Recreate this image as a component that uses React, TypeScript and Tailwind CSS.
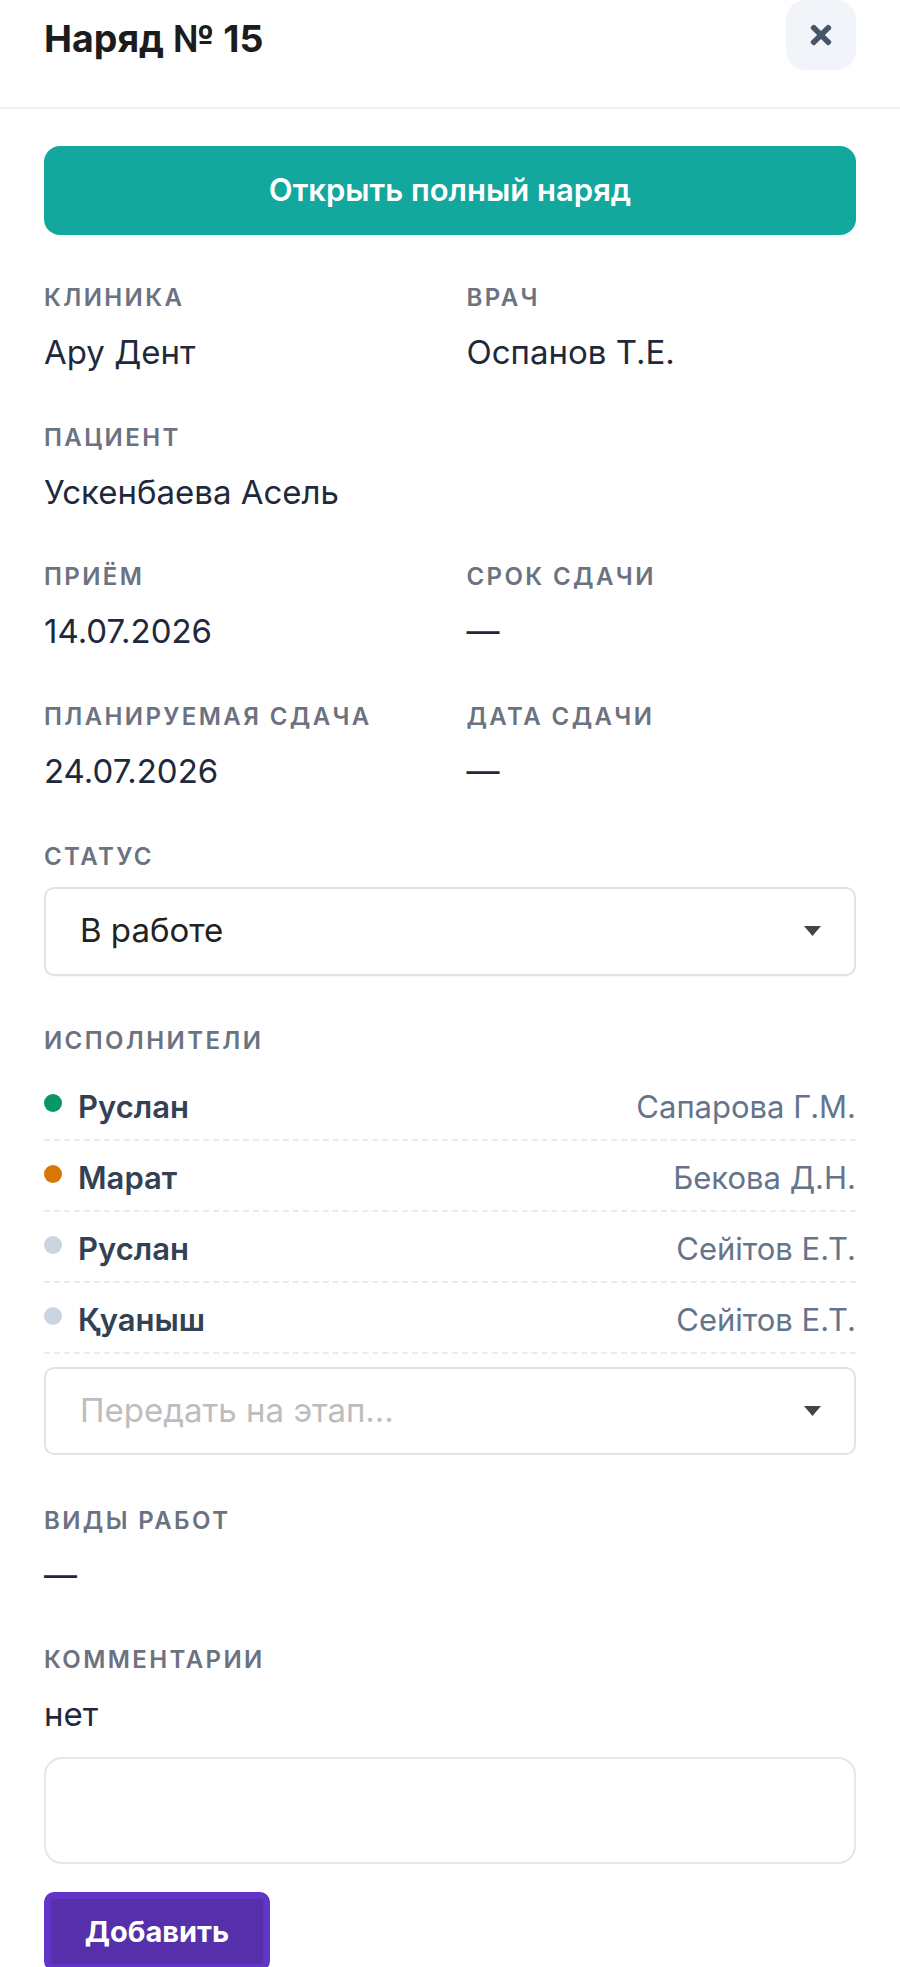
import { FaTimes } from 'react-icons/fa';

type Field = { label: string; value: string } | null;

const rows: [Field, Field][] = [
  [
    { label: 'Клиника', value: 'Ару Дент' },
    { label: 'Врач', value: 'Оспанов Т.Е.' },
  ],
  [{ label: 'Пациент', value: 'Ускенбаева Асель' }, null],
  [
    { label: 'Приём', value: '14.07.2026' },
    { label: 'Срок сдачи', value: '—' },
  ],
  [
    { label: 'Планируемая сдача', value: '24.07.2026' },
    { label: 'Дата сдачи', value: '—' },
  ],
];

const performers = [
  { name: 'Руслан', who: 'Сапарова Г.М.', dot: 'bg-[#059669]' },
  { name: 'Марат', who: 'Бекова Д.Н.', dot: 'bg-[#d97706]' },
  { name: 'Руслан', who: 'Сейітов Е.Т.', dot: 'bg-[#cbd5e1]' },
  { name: 'Қуаныш', who: 'Сейітов Е.Т.', dot: 'bg-[#cbd5e1]' },
];

function Label({ children, className = '' }: { children: React.ReactNode; className?: string }) {
  return (
    <div
      className={`text-[24px] leading-[36px] font-semibold uppercase tracking-[0.1em] text-[#6b7280] ${className}`}
    >
      {children}
    </div>
  );
}

function Value({ children }: { children: React.ReactNode }) {
  return <div className="mt-[16px] text-[33px] leading-[40px] text-[#1e293b]">{children}</div>;
}

function Caret() {
  return (
    <svg width="17" height="10" viewBox="0 0 17 10" className="shrink-0">
      <path d="M0 0h17L8.5 10z" fill="#444" />
    </svg>
  );
}

export default function App() {
  return (
    <div className="w-[900px] bg-white font-['Inter','Noto_Sans',sans-serif]">
      <header className="flex h-[109px] items-start justify-between border-b-2 border-[#eef1f5] pl-[44px] pr-[44px]">
        <h1 className="text-[37.5px] leading-[77px] font-bold text-[#1c1c1c]">Наряд № 15</h1>
        <button className="flex h-[70px] w-[70px] items-center justify-center rounded-[20px] bg-[#f1f4f8] text-[#475569]">
          <FaTimes className="h-[30px] w-[30px]" />
        </button>
      </header>

      <main className="px-[44px] pb-[40px]">
        <button className="mt-[37px] flex h-[89px] w-full items-center justify-center rounded-[16px] bg-[#13a89e] text-[31px] font-semibold text-white">
          Открыть полный наряд
        </button>

        <div className="mt-[45px] grid grid-cols-2 gap-x-[33px] gap-y-[47.5px]">
          {rows.flatMap((pair, i) =>
            pair.map((f, j) =>
              f ? (
                <div key={`${i}-${j}`}>
                  <Label>{f.label}</Label>
                  <Value>{f.value}</Value>
                </div>
              ) : (
                <div key={`${i}-${j}`} />
              ),
            ),
          )}
        </div>

        <Label className="mt-[48px]">Статус</Label>
        <div className="mt-[12px] flex h-[89px] items-center justify-between rounded-[10px] border-2 border-[#e2e2e2] pl-[34px] pr-[33px] shadow-[0_1px_1px_rgba(0,0,0,0.04)]">
          <span className="text-[33px] text-[#222]">В работе</span>
          <Caret />
        </div>

        <Label className="mt-[47px]">Исполнители</Label>
        <div className="mt-[11.5px]">
          {performers.map((p, i) => (
            <div
              key={i}
              className="flex items-start justify-between border-b-2 border-dashed border-[#e8ecf2] pt-[17px] pb-[12px]"
            >
              <div className="flex items-start gap-[16px]">
                <span className={`mt-[7px] h-[18px] w-[18px] rounded-full ${p.dot}`} />
                <span className="text-[31px] leading-[40px] font-semibold text-[#334155]">{p.name}</span>
              </div>
              <span className="text-[31px] leading-[40px] text-[#64748b]">{p.who}</span>
            </div>
          ))}
        </div>

        <div className="mt-[13px] flex h-[88px] items-center justify-between rounded-[10px] border-2 border-[#e2e2e2] pl-[34px] pr-[33px]">
          <span className="text-[33px] text-[#bdbdbd]">Передать на этап...</span>
          <Caret />
        </div>

        <Label className="mt-[48px]">Виды работ</Label>
        <Value>—</Value>

        <Label className="mt-[47px]">Комментарии</Label>
        <Value>нет</Value>

        <textarea className="mt-[23px] block h-[107px] w-full resize-none rounded-[18px] border-2 border-[#e2e8f0] outline-none" />

        <button className="mt-[28px] flex h-[79px] w-[226px] items-center justify-center rounded-[10px] border-[7px] border-[#6135c7] bg-[#5530aa] text-[29px] font-bold text-white">
          Добавить
        </button>
      </main>
    </div>
  );
}
